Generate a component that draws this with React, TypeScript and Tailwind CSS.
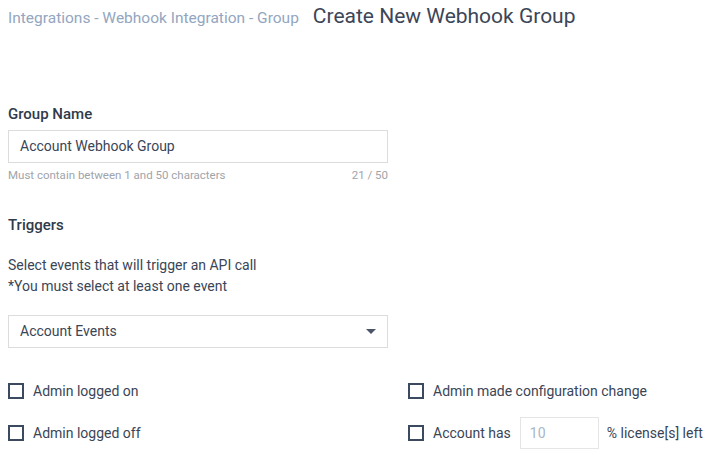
import React from "react";

// Checkbox with label used in the triggers grid
function Check({ children }: { children: React.ReactNode }) {
  return (
    <label className="flex items-center h-[32px] text-[14px] text-[#3a4556]">
      <span className="w-[16px] h-[16px] border-2 border-[#3b4a5e] shrink-0 mr-[9px]" />
      {children}
    </label>
  );
}

export default function App() {
  return (
    <div
      className="w-[720px] h-[455px] bg-white px-[8px] overflow-hidden"
      style={{ fontFamily: "Roboto, 'Liberation Sans', sans-serif" }}
    >
      <div className="flex items-baseline pt-[1px] h-[32px]">
        <span className="text-[15.5px] text-[#93a6c1]">
          Integrations - Webhook Integration - Group
        </span>
        <span className="text-[21px] text-[#3b4658] ml-[14px]">
          Create New Webhook Group
        </span>
      </div>

      <div className="mt-[74px] text-[15px] font-medium text-[#2f3a4a] leading-[16px]">
        Group Name
      </div>
      <div className="mt-[8px] w-[380px] h-[33px] border border-[#dcdcdc] flex items-center px-[11px] text-[14px] text-[#3a4556]">
        Account Webhook Group
      </div>
      <div className="w-[380px] flex justify-between text-[11.5px] text-[#a0a4aa] mt-[5px] leading-[14px]">
        <span>Must contain between 1 and 50 characters</span>
        <span>21 / 50</span>
      </div>

      <div className="mt-[35px] text-[15px] font-medium text-[#2f3a4a] leading-[16px]">
        Triggers
      </div>
      <div className="mt-[22px] text-[14px] text-[#3a4556] leading-[21px]">
        <div>Select events that will trigger an API call</div>
        <div>*You must select at least one event</div>
      </div>

      <div className="mt-[18px] w-[380px] h-[33px] border border-[#dcdcdc] flex items-center justify-between pl-[11px] pr-[11px] text-[14px] text-[#3a4556]">
        <span>Account Events</span>
        <svg width="10" height="5" viewBox="0 0 10 5">
          <path d="M0 0 L10 0 L5 5 Z" fill="#4a5568" />
        </svg>
      </div>

      <div className="mt-[27px] grid grid-cols-[400px_1fr] gap-y-[10px]">
        <Check>Admin logged on</Check>
        <Check>Admin made configuration change</Check>
        <Check>Admin logged off</Check>
        <Check>
          <span>Account has</span>
          <span className="ml-[9px] w-[79px] h-[32px] border border-[#e5e5e5] flex items-center px-[9px] text-[#a8b6c8]">
            10
          </span>
          <span className="ml-[8px]">% license[s] left</span>
        </Check>
      </div>
    </div>
  );
}
